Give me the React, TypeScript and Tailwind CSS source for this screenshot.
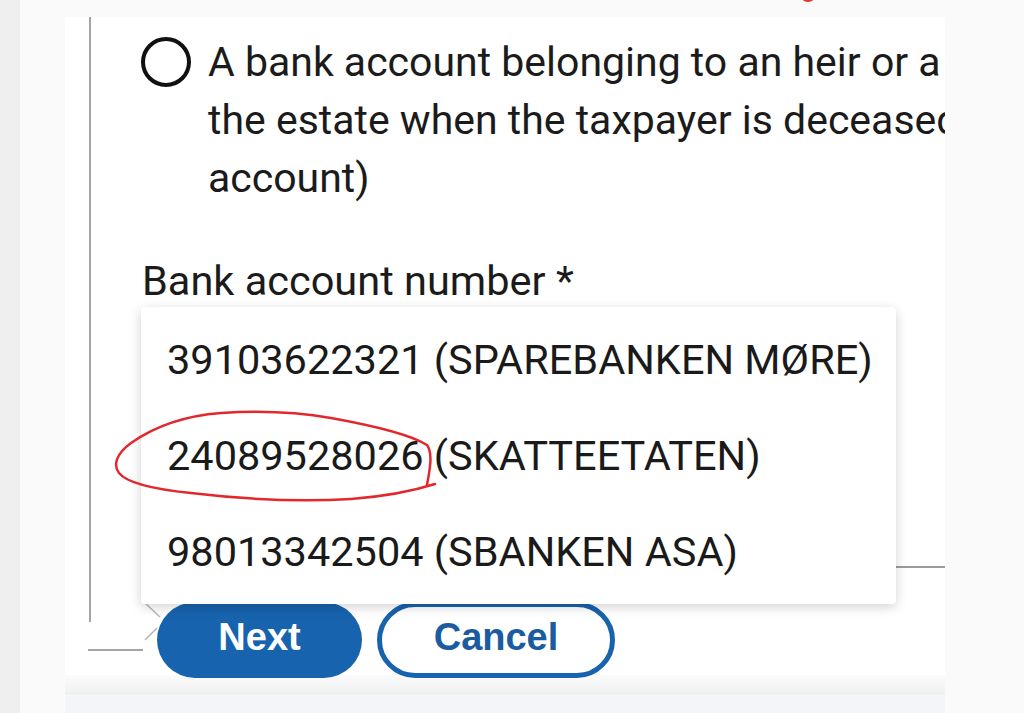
const accounts = [
  "39103622321 (SPAREBANKEN MØRE)",
  "24089528026 (SKATTEETATEN)",
  "98013342504 (SBANKEN ASA)",
];

export default function App() {
  return (
    <div className="flex h-[713px] w-[1024px] overflow-hidden bg-[#fafafa] font-['Roboto',sans-serif] text-[#1b1b1b]">
      <div className="w-[20px] shrink-0 bg-[#efefef]" />
      <div className="flex flex-1 flex-col">
        {/* top strip with the edge of a red badge */}
        <div className="h-[17px] shrink-0 overflow-hidden">
          <div className="-mt-[14px] ml-[780px] h-4 w-4 rounded-full bg-[#e8342f]" />
        </div>

        <div className="ml-[45px] flex w-[880px] flex-1 flex-col">
          <div className="h-[658px] shrink-0 overflow-x-clip bg-white">
            {/* radio group / field block */}
            <div className="relative ml-[24px] flex h-[605px] flex-col border-l-2 border-[#a5a5a5] pl-[50px] pt-[16px]">
              <label className="flex items-start gap-[17px]">
                <span className="mt-[4px] h-[50px] w-[50px] shrink-0 rounded-full border-4 border-[#111]" />
                <span className="whitespace-nowrap text-[41px] leading-[58px]">
                  A bank account belonging to an heir or a
                  <br />
                  the estate when the taxpayer is deceased (not a client
                  <br />
                  account)
                </span>
              </label>

              <div className="relative mt-[45px]">
                <div className="ml-[1px] whitespace-nowrap text-[41.5px] leading-[58px]">Bank account number *</div>
                <div className="h-[258px] w-[900px] border-b-2 border-[#9c9c9c]" />

                <ul className="absolute left-0 top-[55px] z-10 w-[755px] rounded-[4px] bg-white pb-[4px] pt-[5px] shadow-[0_3px_12px_rgba(0,0,0,0.18)]">
                  {accounts.map((a) => (
                    <li key={a} className="flex h-[96px] items-center whitespace-nowrap pl-[26px] text-[41.5px] text-[#1a1a1a]">
                      {a}
                    </li>
                  ))}
                </ul>

                {/* hand-drawn red mark */}
                <svg
                  className="absolute left-[-30px] top-[155px] z-20 h-[100px] w-[330px]"
                  viewBox="0 0 330 100"
                  fill="none"
                >
                  <path
                    d="M316 78 C319 62 322 46 316 38 C300 28 270 20 220 11 C180 4 140 4 110 6 C70 9 40 22 20 36 C5 47 2 58 8 66 C16 76 40 82 80 86 C130 92 190 95 240 92 C280 89 305 83 324 77"
                    stroke="#e2282c"
                    strokeWidth="2.5"
                    strokeLinecap="round"
                  />
                </svg>
              </div>
            </div>

            {/* actions */}
            <div className="relative -mt-[20px] flex h-[76px] items-start">
              <div className="ml-[23px] mt-[47px] h-[2px] w-[55px] bg-[#a5a5a5]" />
              <svg className="absolute left-[78px] top-0 h-[42px] w-[20px]" viewBox="0 0 20 42" fill="none">
                <path d="M2 1 L17 15 M2 38 L14 26" stroke="#b5b5b5" strokeWidth="1.5" />
              </svg>
              <button className="relative ml-[14px] h-[76px] w-[205px] rounded-full bg-[#1763ad] pb-[6px] font-['Liberation_Sans',sans-serif] text-[38px] font-bold text-white">
                Next
              </button>
              <button className="relative ml-[15px] h-[76px] w-[238px] rounded-full border-[5px] border-[#1763ad] bg-white pb-[6px] font-['Liberation_Sans',sans-serif] text-[38px] font-bold text-[#1a5c9f]">
                Cancel
              </button>
            </div>
          </div>
          <div className="h-[18px] shrink-0 bg-linear-to-b from-[#fbfbfb] to-[#f1f1f1]" />
          <div className="flex-1 border-t border-[#ececec] bg-[#f3f5f8]" />
        </div>
      </div>
    </div>
  );
}
